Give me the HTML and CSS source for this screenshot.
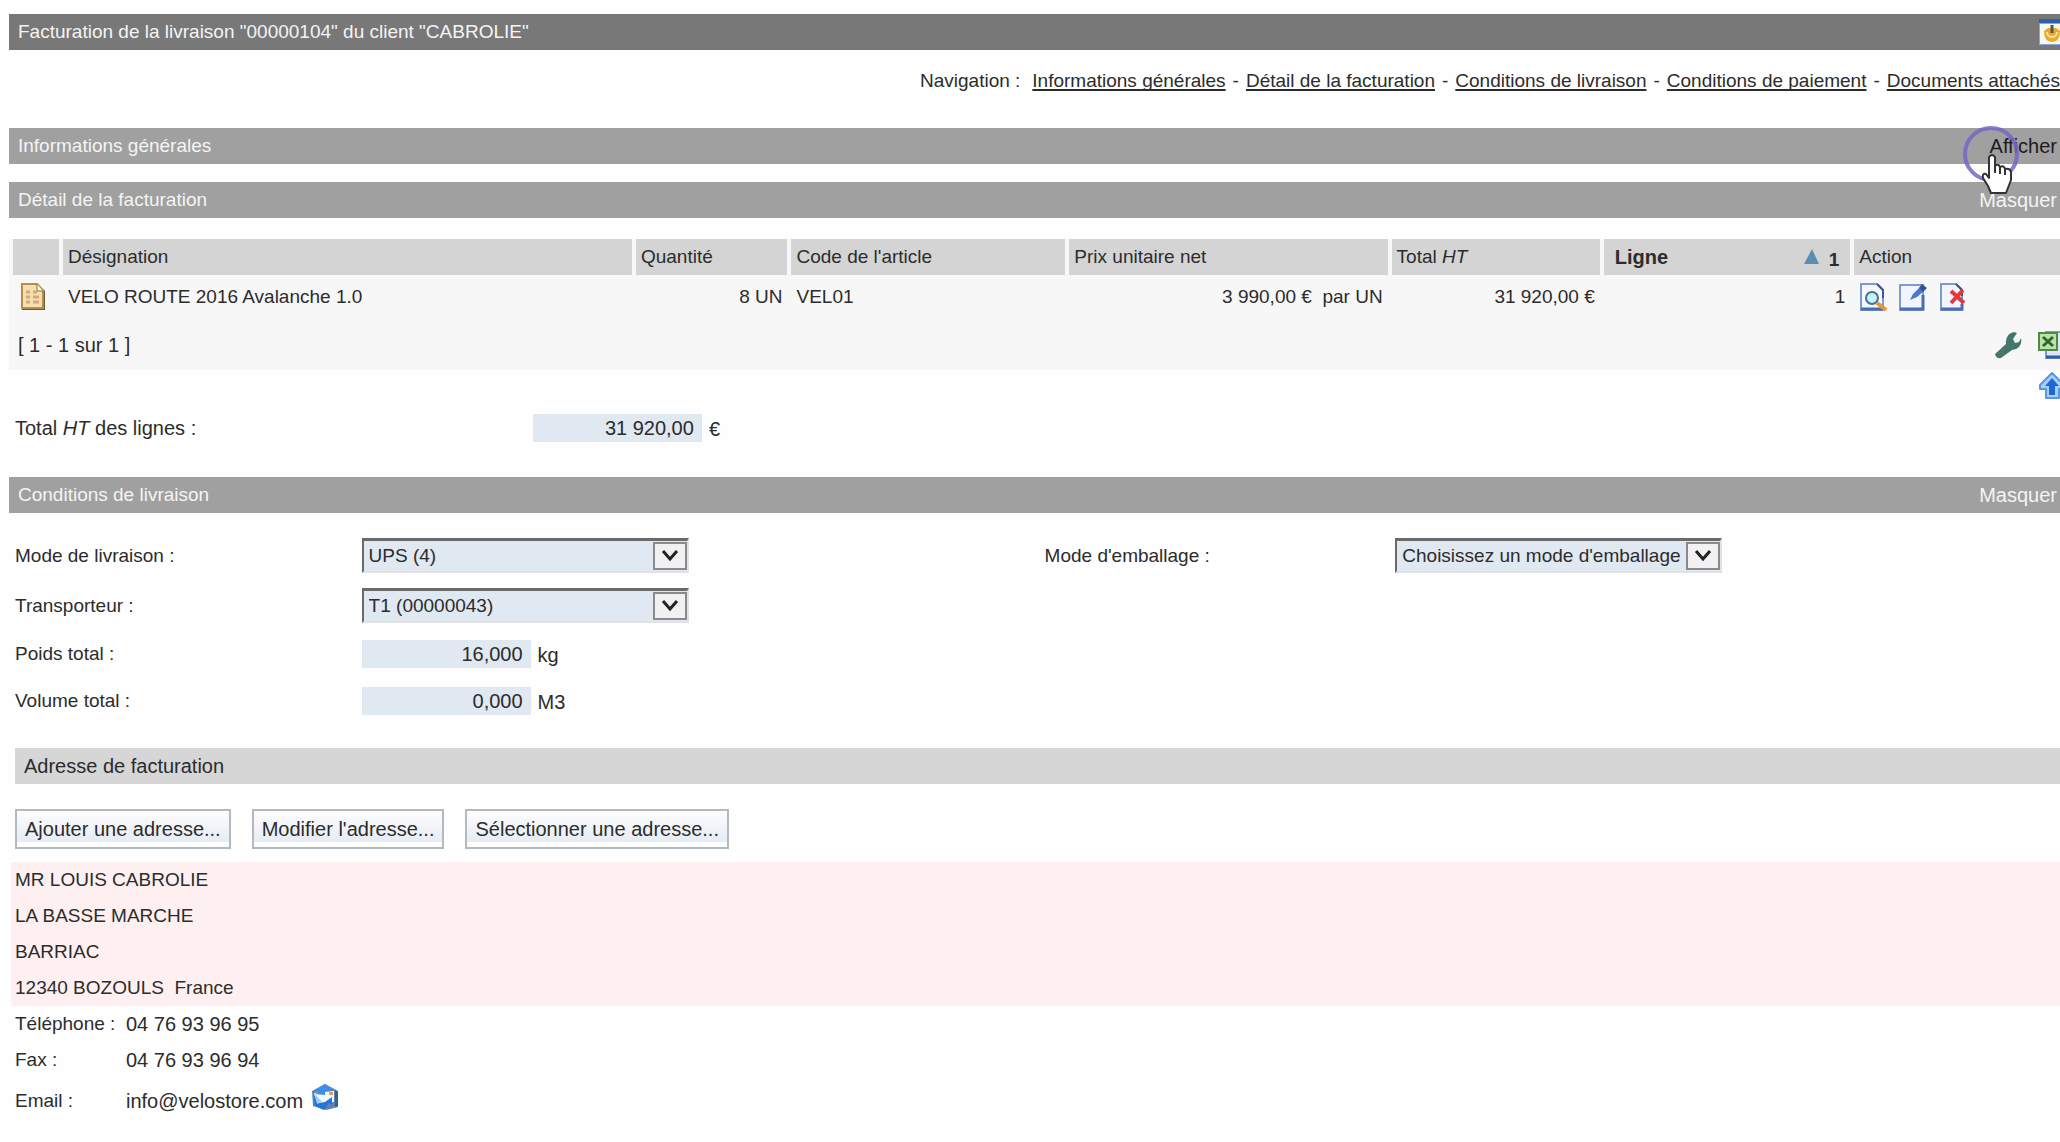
FILE: index.html
```html
<!DOCTYPE html>
<html lang="fr">
<head>
<meta charset="utf-8">
<title>Facturation de la livraison</title>
<link rel="stylesheet" href="styles.css">
</head>
<body>
<main class="page">
  <header class="bar bar-title">
    <h1 class="bar-label">Facturation de la livraison "00000104" du client "CABROLIE"</h1>
    <button class="icon-button" type="button" aria-label="Fermer">
      <svg width="28" height="28" viewBox="0 0 28 28"><rect x="1" y="1" width="27" height="26" fill="#8aa6d6"/><rect x="2" y="6" width="26" height="20" fill="#f6f6f2"/><rect x="1" y="1" width="27" height="4" fill="#2a63ab"/><path d="M6 13q0 11 8 11t8-11l-4-3H10z" fill="#eaa92b"/><path d="M9 14a5 5 0 0 0 10 0" fill="none" stroke="#ffe58c" stroke-width="2"/><path d="M14 7v8" stroke="#4c5c54" stroke-width="3"/></svg>
    </button>
  </header>

  <nav class="nav" aria-label="Navigation">
    <span class="nav-title">Navigation :</span>
    <a href="#infos">Informations générales</a><span class="dash">-</span>
    <a href="#detail">Détail de la facturation</a><span class="dash">-</span>
    <a href="#livraison">Conditions de livraison</a><span class="dash">-</span>
    <a href="#paiement">Conditions de paiement</a><span class="dash">-</span>
    <a href="#documents">Documents attachés</a>
  </nav>

  <section class="bar" id="infos">
    <h2 class="bar-label">Informations générales</h2>
    <a class="toggle toggle-hover" href="#infos">Afficher
      <svg class="pointer" width="64" height="70" viewBox="0 0 64 70" aria-hidden="true"><circle cx="30" cy="30" r="26" fill="none" stroke="#7466c4" stroke-width="4" stroke-opacity=".85"/><path d="M28 33q3-4 6 0v9q3-3 5 1 4-2 5 2 5-1 6 3v8l-5 13H30l-3-7-5-8q-1-5 3-4l3 4z" fill="#fff" stroke="#333" stroke-width="2" stroke-linejoin="round"/><path d="M34 42v7M39 43v7M44 45v6" stroke="#333" stroke-width="2"/></svg>
    </a>
  </section>

  <section class="detail" id="detail">
    <div class="bar">
      <h2 class="bar-label">Détail de la facturation</h2>
      <a class="toggle" href="#detail">Masquer</a>
    </div>
    <table class="lines">
      <colgroup><col class="c-icon"><col class="c-name"><col class="c-qty"><col class="c-code"><col class="c-price"><col class="c-total"><col class="c-line"><col></colgroup>
      <thead>
        <tr>
          <th></th><th>Désignation</th><th>Quantité</th><th>Code de l'article</th><th>Prix unitaire net</th><th>Total <i>HT</i></th>
          <th class="sorted"><div class="sort"><b>Ligne</b><svg width="18" height="18" viewBox="0 0 18 18" aria-hidden="true"><path d="M9 1l7 15H1z" fill="#5b8fb0"/></svg><b class="rank">1</b></div></th>
          <th>Action</th>
        </tr>
      </thead>
      <tbody>
        <tr>
          <td class="center"><svg width="26" height="28" viewBox="0 0 26 28" aria-hidden="true"><path d="M2 1h16l7 7v19H2z" fill="#6a5a3a"/><path d="M2 1h15l6 7v17H2z" fill="#f6dfae" stroke="#b58d4c" stroke-width="2"/><path d="M17 1v7h6" fill="#fff3d4" stroke="#8d7446"/><path d="M6 9h4M13 9h4M6 14h4M13 14h6M6 19h4M13 19h6" stroke="#d9a878" stroke-width="3"/></svg></td>
          <td>VELO ROUTE 2016 Avalanche 1.0</td>
          <td class="num">8 UN</td>
          <td>VEL01</td>
          <td class="num">3 990,00 €&nbsp; par UN</td>
          <td class="num">31 920,00 €</td>
          <td class="num">1</td>
          <td>
            <div class="actions">
              <button class="icon-button" type="button" aria-label="Consulter"><svg width="28" height="28" viewBox="0 0 28 28"><path d="M2 1h16l6 6v20H2z" fill="#f3f7ff" stroke="#7f9ace" stroke-width="2"/><path d="M18 1l6 6v8" fill="none" stroke="#3f5688" stroke-width="2"/><path d="M2 26h22" stroke="#4a6cb4" stroke-width="3"/><circle cx="13" cy="15" r="6" fill="#c5f2f3" stroke="#48708e" stroke-width="2"/><path d="M18 20l9 7" stroke="#e9963a" stroke-width="4"/></svg></button>
              <button class="icon-button" type="button" aria-label="Modifier"><svg width="28" height="28" viewBox="0 0 28 28"><path d="M1 2h23v25H1z" fill="#f1f5ff" stroke="#7f9ace" stroke-width="2"/><path d="M1 26h23V12" fill="none" stroke="#4a6cb4" stroke-width="3"/><path d="M11 17l3-6 7-7 4 4-7 6z" fill="#4a7ad0"/><path d="M20 5l3-4 5 4-4 4z" fill="#3b4f94"/></svg></button>
              <button class="icon-button" type="button" aria-label="Supprimer"><svg width="28" height="28" viewBox="0 0 28 28"><path d="M2 1h15l6 6v20H2z" fill="#f1f5ff" stroke="#7f9ace" stroke-width="2"/><path d="M17 1l6 6v6" fill="none" stroke="#3f4f80" stroke-width="2"/><path d="M2 26h21v-5" fill="none" stroke="#4a6cb4" stroke-width="3"/><path d="M12 8l13 12M24 7L12 20" stroke="#e23a3c" stroke-width="4"/></svg></button>
            </div>
          </td>
        </tr>
      </tbody>
    </table>
    <div class="pager">
      <span>[ 1 - 1 sur 1 ]</span>
      <div class="tools">
        <button class="icon-button" type="button" aria-label="Configurer"><svg width="28" height="28" viewBox="0 0 28 28"><path d="M1 23L12 13Q11 3 20 1l3 1-4 6 2 4 4-1 2-4q2 10-9 12L7 27q-5 1-6-4z" fill="#44776c"/></svg></button>
        <button class="icon-button" type="button" aria-label="Exporter vers Excel"><svg width="28" height="28" viewBox="0 0 28 28"><path d="M8 1h20v26H8z" fill="#dbe6f8" stroke="#7f9ace" stroke-width="2"/><path d="M8 26h20" stroke="#315da7" stroke-width="3"/><rect x="1" y="2" width="18" height="17" fill="#bfe0a9" stroke="#4b8b46" stroke-width="2"/><path d="M5 6l10 9M15 6L5 15" stroke="#286b2c" stroke-width="3"/></svg></button>
      </div>
    </div>
    <div class="to-top">
      <a href="#" aria-label="Haut de page"><svg width="28" height="28" viewBox="0 0 28 28"><path d="M14 1l12 12v4h-5v9H8v-9H2v-4z" fill="#a9d0fa" stroke="#5b97e0" stroke-width="2" stroke-linejoin="round"/><path d="M14 6l7 8h-4v9h-6v-9H7z" fill="#1e67d4"/></svg></a>
    </div>
    <div class="total">
      <label for="total">Total <i>HT</i> des lignes :</label>
      <div class="field"><input class="amount" id="total" type="text" value="31 920,00"><span class="unit">€</span></div>
    </div>
  </section>

  <section class="delivery" id="livraison">
    <div class="bar">
      <h2 class="bar-label">Conditions de livraison</h2>
      <a class="toggle" href="#livraison">Masquer</a>
    </div>
    <div class="form">
      <label for="mode">Mode de livraison :</label>
      <div class="select">
        <select id="mode"><option>UPS (4)</option></select>
        <svg class="caret" width="34" height="28" viewBox="0 0 34 28" aria-hidden="true"><rect x="1" y="1" width="32" height="26" fill="#f1f1f1" stroke="#8a8a8a" stroke-width="2"/><path d="M10 9l7 8 7-8" fill="none" stroke="#222" stroke-width="3"/></svg>
      </div>
      <label for="pack">Mode d'emballage :</label>
      <div class="select">
        <select id="pack"><option>Choisissez un mode d'emballage</option></select>
        <svg class="caret" width="34" height="28" viewBox="0 0 34 28" aria-hidden="true"><rect x="1" y="1" width="32" height="26" fill="#f1f1f1" stroke="#8a8a8a" stroke-width="2"/><path d="M10 9l7 8 7-8" fill="none" stroke="#222" stroke-width="3"/></svg>
      </div>
      <label class="first" for="carrier">Transporteur :</label>
      <div class="select">
        <select id="carrier"><option>T1 (00000043)</option></select>
        <svg class="caret" width="34" height="28" viewBox="0 0 34 28" aria-hidden="true"><rect x="1" y="1" width="32" height="26" fill="#f1f1f1" stroke="#8a8a8a" stroke-width="2"/><path d="M10 9l7 8 7-8" fill="none" stroke="#222" stroke-width="3"/></svg>
      </div>
      <label class="first" for="weight">Poids total :</label>
      <div class="field"><input class="amount" id="weight" type="text" value="16,000"><span class="unit">kg</span></div>
      <label class="first" for="volume">Volume total :</label>
      <div class="field"><input class="amount" id="volume" type="text" value="0,000"><span class="unit">M3</span></div>
    </div>
  </section>

  <section class="address">
    <h3 class="subbar">Adresse de facturation</h3>
    <div class="buttons">
      <button class="button" type="button">Ajouter une adresse...</button>
      <button class="button" type="button">Modifier l'adresse...</button>
      <button class="button" type="button">Sélectionner une adresse...</button>
    </div>
    <address class="postal">
      <div>MR LOUIS CABROLIE</div>
      <div>LA BASSE MARCHE</div>
      <div>BARRIAC</div>
      <div>12340 BOZOULS&nbsp; France</div>
    </address>
    <dl class="contact">
      <dt>Téléphone :</dt><dd>04 76 93 96 95</dd>
      <dt>Fax :</dt><dd>04 76 93 96 94</dd>
      <dt class="mail">Email :</dt>
      <dd class="mail">info@velostore.com
        <button class="icon-button mail-icon" type="button" aria-label="Envoyer un email"><svg width="28" height="28" viewBox="0 0 28 28"><path d="M1 8L14 1l13 7v16l-12 3L2 23z" fill="#5b83b5"/><path d="M3 10l20-2v11L6 21z" fill="#f5faff"/><path d="M14 1l8 6-8 1v4L4 11l4-2-4-2z" fill="#3b8ee8"/><path d="M3 12l5 8 6-1 7-5v8l-3-2-5 7-9-4z" fill="#2475d8"/><path d="M3 10l3 11 5-2z" fill="#9accff"/><rect x="18" y="9" width="4" height="3" fill="#d99a63"/><path d="M24 7l3 2v14l-3 1z" fill="#35618f"/></svg></button>
      </dd>
    </dl>
  </section>
</main>
</body>
</html>
```
FILE: styles.css
```css
* {
  box-sizing: border-box;
}

body {
  margin: 0;
  overflow-x: hidden;
  background: #fefefe;
  color: #2c2c2c;
  font: 20px/24px "Liberation Sans", Arial, sans-serif;
}

h1, h2, h3, dl, dd {
  margin: 0;
  font-size: inherit;
  font-weight: normal;
}

input, select, button {
  font: inherit;
  color: inherit;
}

svg {
  display: block;
}

/* The content runs a little past the right edge of the window. */
.page {
  margin-right: -6px;
  padding: 14px 0 24px 9px;
}

.bar {
  display: flex;
  align-items: center;
  justify-content: space-between;
  height: 36px;
  padding: 0 9px;
  background: #a0a0a0;
  color: #f4f4f4;
}

.bar-title {
  padding-right: 0;
  background: #787878;
}

.bar-label {
  font-size: 19px;
}

.toggle {
  position: relative;
  color: inherit;
  text-decoration: none;
}

.toggle-hover {
  color: #1c1c1c;
}

.pointer {
  position: absolute;
  top: -10px;
  left: -29px;
  z-index: 1;
}

.icon-button {
  padding: 0;
  border: 0;
  background: none;
}

.nav {
  display: flex;
  justify-content: flex-end;
  padding: 19px 6px 35px 0;
  font-size: 19px;
  white-space: nowrap;
}

.nav a {
  color: inherit;
  text-decoration-thickness: 2px;
  text-underline-offset: 2px;
  text-decoration-skip-ink: none;
}

.nav-title {
  margin-right: 12px;
}

.dash {
  margin: 0 7px;
}

.detail {
  padding-top: 18px;
}

.lines {
  width: 100%;
  margin-top: 21px;
  border-spacing: 4px 0;
  table-layout: fixed;
  background: #f7f7f7;
}

.c-icon { width: 46px; }
.c-name { width: 28.15%; }
.c-qty { width: 7.5%; }
.c-code { width: 13.55%; }
.c-price { width: 15.75%; }
.c-total { width: 10.3%; }
.c-line { width: 12.2%; }

.lines th,
.lines td {
  padding: 0 5px;
  font-size: 19px;
}

.lines th {
  height: 36px;
  background: #d4d4d4;
  font-weight: normal;
  text-align: left;
  white-space: nowrap;
}

.lines td {
  height: 43px;
}

.lines .num {
  text-align: right;
}

.lines .center {
  padding: 0 7px;
}

.sort {
  display: flex;
  align-items: center;
  padding: 0 6px;
  font-size: 20px;
}

.sort svg {
  margin-left: auto;
}

.rank {
  margin: 6px 0 0 8px;
  font-size: 19px;
  line-height: 18px;
}

.actions {
  display: flex;
  gap: 12px;
}

.pager {
  display: flex;
  align-items: center;
  justify-content: space-between;
  height: 52px;
  padding: 2px 0 0 9px;
  background: #f7f7f7;
}

.tools {
  display: flex;
  gap: 16px;
}

.to-top {
  display: flex;
  justify-content: flex-end;
  padding: 2px 0 14px;
}

.total {
  display: grid;
  grid-template-columns: 25.25% 1fr;
  align-items: center;
  padding-left: 6px;
}

.form label {
  font-size: 19px;
}

.field {
  display: flex;
  align-items: center;
  gap: 7px;
}

.form .field {
  min-height: 32px;
}

.amount {
  width: 169px;
  height: 28px;
  padding: 0 8px;
  border: 0;
  background: #e0e8f1;
  text-align: right;
}

.unit {
  padding-top: 2px;
}

.delivery {
  padding-top: 35px;
}

.form {
  display: grid;
  grid-template-columns: 16.9% 33.3% 17.1% 1fr;
  align-items: center;
  row-gap: 15px;
  padding: 25px 0 31px 6px;
}

.first {
  grid-column: 1;
}

.select {
  display: grid;
  align-items: center;
  width: 327px;
}

.select select {
  grid-area: 1 / 1;
  width: 100%;
  height: 35px;
  padding: 0 36px 0 5px;
  border: 2px solid #e2e2e2;
  border-top: 3px solid #6a6a6a;
  border-left-color: #6a6a6a;
  border-radius: 0;
  background: #e0e8f1;
  font-size: 19px;
  appearance: none;
}

.caret {
  grid-area: 1 / 1;
  justify-self: end;
  margin-right: 2px;
  pointer-events: none;
}

.subbar {
  height: 36px;
  margin-left: 6px;
  padding: 0 9px;
  background: #d6d6d6;
  line-height: 36px;
}

.buttons {
  display: flex;
  gap: 21px;
  padding: 25px 0 13px 6px;
}

.button {
  height: 40px;
  padding: 0 8px;
  border: 2px solid #b4b9be;
  background: linear-gradient(#fdfdfe, #e6ecf4 85%, #ffffff 86%);
}

.postal {
  margin-left: 2px;
  padding-left: 4px;
  background: #fef0f0;
  font-size: 19px;
  font-style: normal;
  line-height: 36px;
}

.contact {
  display: grid;
  grid-template-columns: 111px 1fr;
  padding-left: 6px;
  line-height: 36px;
}

.contact dt {
  font-size: 19px;
}

.mail {
  display: flex;
  align-items: center;
  height: 46px;
}

.mail-icon {
  margin: 0 0 8px 8px;
}
```
